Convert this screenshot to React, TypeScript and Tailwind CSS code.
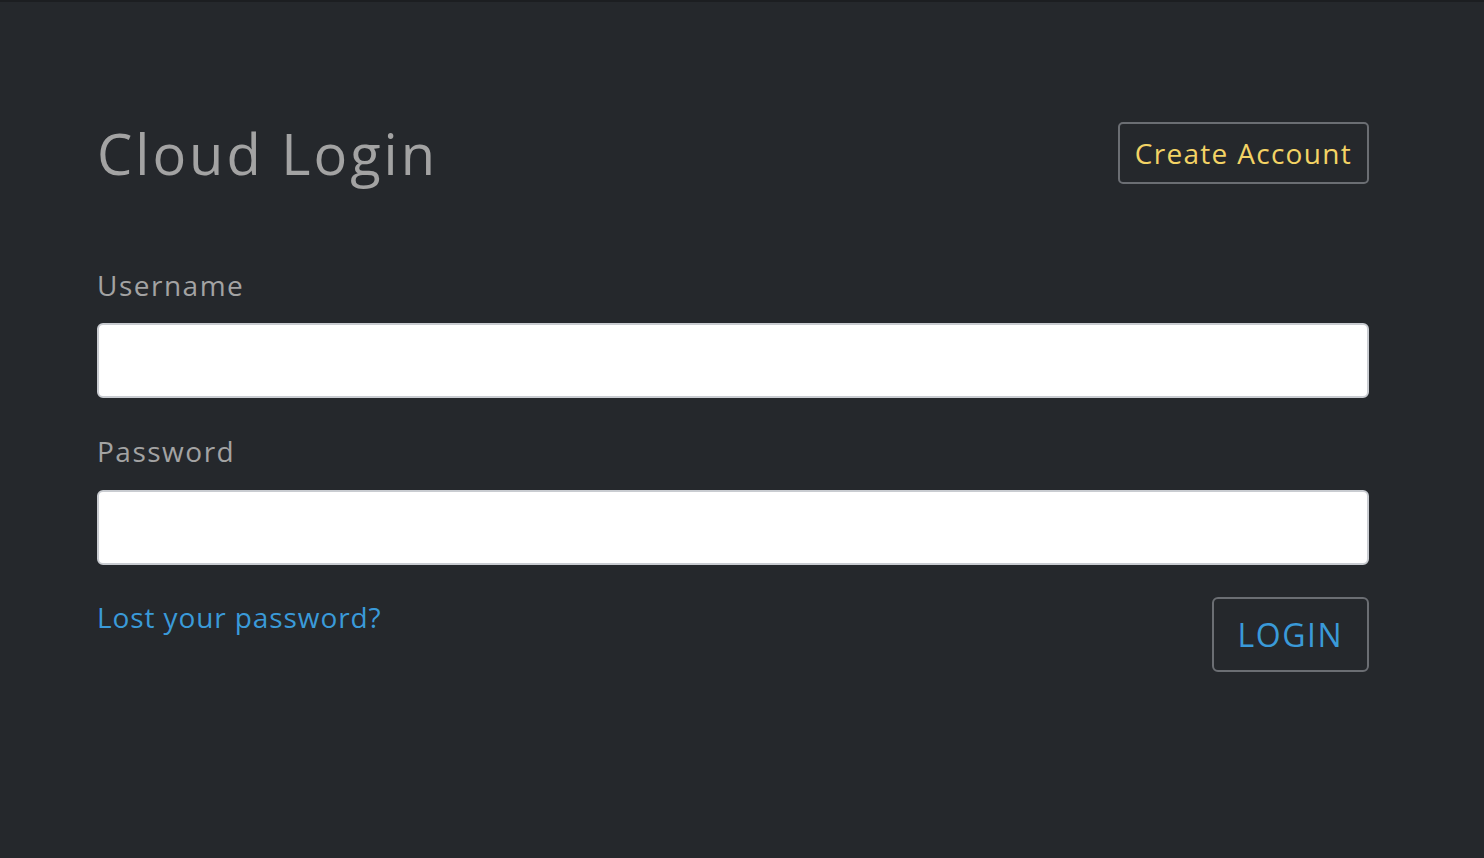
export default function App() {
  return (
    <div
      className="min-h-[858px] w-full border-t-2 border-[#1c1e21] bg-[#25282c]"
      style={{ fontFamily: '"Open Sans", "Liberation Sans", sans-serif' }}
    >
      <div className="pl-[97px] pr-[115px] pt-[120px]">
        <div className="flex items-start justify-between">
          <h1 className="-mt-[4px] text-[56px] font-normal leading-[70px] tracking-[3px] text-[#a3a3a3]">
            Cloud Login
          </h1>
          <button className="h-[62px] rounded-[5px] border-2 border-[#6b6e73] px-[15px] text-[28px] tracking-[1.3px] text-[#f3d365]">
            Create Account
          </button>
        </div>

        <form className="mt-[77px]">
          <label className="block text-[28px] leading-[40px] tracking-[1.5px] text-[#a3a3a3]">Username</label>
          <input
            type="text"
            className="mt-[18px] block h-[75px] w-full rounded-[6px] border-2 border-[#c9ccd1] bg-white"
          />
          <label className="mt-[33px] block text-[28px] leading-[40px] tracking-[1.5px] text-[#a3a3a3]">Password</label>
          <input
            type="password"
            className="mt-[19px] block h-[75px] w-full rounded-[6px] border-2 border-[#c9ccd1] bg-white"
          />
          <div className="mt-[32px] flex items-start justify-between">
            <a href="#" className="text-[28px] leading-[40px] tracking-[0.9px] text-[#3a9ad9]">
              Lost your password?
            </a>
            <button
              type="button"
              className="h-[75px] rounded-[6px] border-2 border-[#6b6e73] px-[24px] text-[32px] tracking-[1.5px] text-[#3a9ad9]"
            >
              LOGIN
            </button>
          </div>
        </form>
      </div>
    </div>
  );
}
